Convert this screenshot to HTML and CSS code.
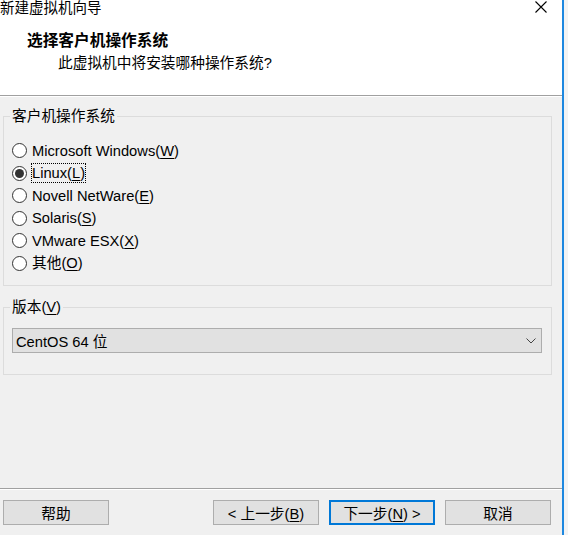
FILE: index.html
```html
<!DOCTYPE html>
<html lang="zh-CN">
<head>
<meta charset="utf-8">
<title>新建虚拟机向导</title>
<link rel="stylesheet" href="styles.css">
</head>
<body>
<div class="window">
  <div class="top">
    <div class="titlebar">
      <span class="title">新建虚拟机向导</span>
      <svg class="close" viewBox="0 0 12 12" width="12" height="12"><path d="M0.5 0.5 L11.5 11.5 M11.5 0.5 L0.5 11.5" stroke="#000" stroke-width="1.1" fill="none"/></svg>
    </div>
    <div class="heading">选择客户机操作系统</div>
    <div class="subheading">此虚拟机中将安装哪种操作系统?</div>
  </div>
  <div class="content">
    <fieldset class="group os-group">
      <legend>客户机操作系统</legend>
      <div class="radio-row"><span class="radio"></span><span class="label">Microsoft Windows(<u>W</u>)</span></div>
      <div class="radio-row"><span class="radio checked"><span class="dot"></span></span><span class="label focused">Linux(<u>L</u>)</span></div>
      <div class="radio-row"><span class="radio"></span><span class="label">Novell NetWare(<u>E</u>)</span></div>
      <div class="radio-row"><span class="radio"></span><span class="label">Solaris(<u>S</u>)</span></div>
      <div class="radio-row"><span class="radio"></span><span class="label">VMware ESX(<u>X</u>)</span></div>
      <div class="radio-row"><span class="radio"></span><span class="label">其他(<u>O</u>)</span></div>
    </fieldset>
    <fieldset class="group version-group">
      <legend>版本(<u>V</u>)</legend>
      <div class="select">
        <span class="select-text">CentOS 64 位</span>
        <svg class="chevron" viewBox="0 0 10 6" width="10" height="6"><path d="M0.5 0.5 L5 5 L9.5 0.5" stroke="#444" stroke-width="1" fill="none"/></svg>
      </div>
    </fieldset>
  </div>
  <div class="footer">
    <button class="btn">帮助</button>
    <div class="nav-buttons">
      <button class="btn">&lt; 上一步(<u>B</u>)</button>
      <button class="btn btn-default">下一步(<u>N</u>) &gt;</button>
      <button class="btn">取消</button>
    </div>
  </div>
</div>
</body>
</html>
```
FILE: styles.css
```css
html, body {
  margin: 0;
  height: 100%;
}
body {
  background: #f3f3f3;
  font-family: "Liberation Sans", "Noto Sans CJK SC", sans-serif;
  font-size: 14.7px;
  color: #000;
  overflow: hidden;
}
.window {
  width: 562px;
  height: 535px;
  border-right: 2px solid #1e88e0;
  display: flex;
  flex-direction: column;
  background: #f0f0f0;
}
.top {
  flex: none;
  height: 95px;
  background: #fff;
  border-bottom: 1px solid #a0a0a0;
}
.titlebar {
  display: flex;
  justify-content: space-between;
  align-items: flex-start;
  height: 18px;
  padding-right: 15px;
}
.title {
  font-size: 14.5px;
  line-height: 16px;
}
.close {
  margin-top: 1px;
}
.heading {
  font-weight: bold;
  font-size: 15.7px;
  line-height: 20px;
  margin: 13px 0 0 27px;
}
.subheading {
  line-height: 20px;
  margin: 2px 0 0 58px;
}
.content {
  flex: 1;
  border-top: 1px solid #fff;
  padding: 0 10px 0 3px;
}
.group {
  margin: 0;
  border: 1px solid #dcdcdc;
  padding: 0;
  min-width: 0;
}
.group legend {
  padding: 0 2px;
  margin-left: -2px;
  line-height: 20px;
}
.os-group {
  margin-top: 9px;
  padding: 13.5px 0 10.5px 8px;
}
.radio-row {
  height: 22.5px;
  display: flex;
  align-items: center;
}
.radio {
  width: 15px;
  height: 15px;
  box-sizing: border-box;
  border: 1px solid #333;
  border-radius: 50%;
  background: #fff;
  margin-right: 5px;
  display: flex;
  align-items: center;
  justify-content: center;
  flex: none;
}
.dot {
  width: 9px;
  height: 9px;
  border-radius: 50%;
  background: #333;
}
.label {
  line-height: 18px;
}
.label.focused {
  outline: 1px dotted #000;
  outline-offset: 0;
}
u {
  text-underline-offset: 2px;
}
.version-group {
  margin-top: 11px;
  padding: 11px 0 21px 8px;
}
.select {
  width: 530px;
  height: 25px;
  box-sizing: border-box;
  border: 1px solid #adadad;
  background: #e1e1e1;
  display: flex;
  align-items: center;
  justify-content: space-between;
  padding: 0 5px 0 3px;
}
.footer {
  flex: none;
  border-top: 1px solid #a0a0a0;
  box-shadow: inset 0 1px 0 #fff;
  padding: 11px 11px 10px 3px;
  display: flex;
  justify-content: space-between;
}
.nav-buttons {
  display: flex;
  gap: 10px;
}
.btn {
  width: 106px;
  height: 25px;
  box-sizing: border-box;
  border: 1px solid #adadad;
  background: #e1e1e1;
  font: inherit;
  color: #000;
  padding: 0;
  border-radius: 0;
}
.btn-default {
  border: 2px solid #0078d7;
}
```
